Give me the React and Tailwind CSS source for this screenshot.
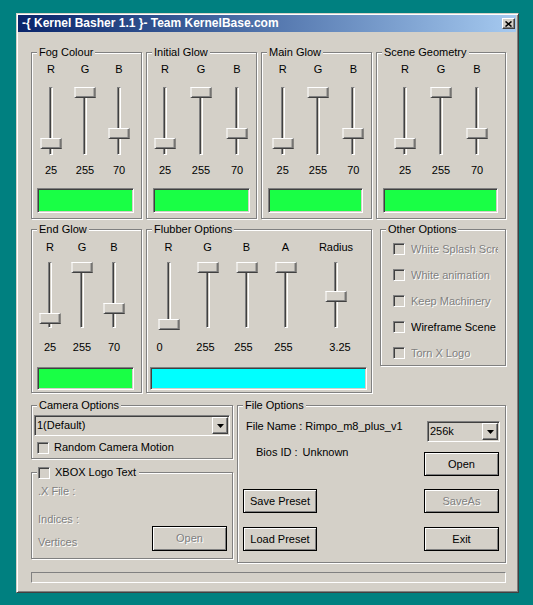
import React from 'react';

const raised = 'bg-[#d4d0c8] border border-white border-r-[#404040] border-b-[#404040] shadow-[inset_-1px_-1px_0_#808080]';
const sunken = 'border border-[#808080] border-r-white border-b-white shadow-[inset_1px_1px_0_#404040,inset_-1px_-1px_0_#d4d0c8]';
const dim = 'text-[#808080] [text-shadow:1px_1px_0_#fff]';

function Group({ label, className = '', children }) {
  return (
    <div className={`relative border border-[#808080] shadow-[1px_1px_0_#fff,inset_1px_1px_0_#fff] ${className}`}>
      <div className="absolute -top-[7px] left-[5px] bg-[#d4d0c8] px-[2px] leading-[13px] whitespace-nowrap">{label}</div>
      {children}
    </div>
  );
}

function Slider({ label, value, frac, w, trackCls, valueCls = '' }) {
  return (
    <div className={`flex flex-col items-center ${w}`}>
      <div className="h-[13px] leading-[13px]">{label}</div>
      <div className={`relative flex justify-center w-full ${trackCls}`}>
        <div className="w-[4px] h-full border border-[#808080] border-r-white border-b-white bg-[#d4d0c8] shadow-[inset_1px_0_0_#404040]" />
        <div
          className={`absolute left-1/2 -translate-x-1/2 w-[21px] h-[11px] ${raised}`}
          style={{ top: Math.round((1 - frac) * 57) }}
        />
      </div>
      <div className={`h-[13px] leading-[13px] ${valueCls}`}>{value}</div>
    </div>
  );
}

function Check({ className = '' }) {
  return <div className={`w-[12px] h-[12px] shrink-0 bg-[#d4d0c8] ${sunken} ${className}`} />;
}

function Arrow() {
  return (
    <svg width="7" height="4" viewBox="0 0 7 4">
      <path d="M0 0H7L3.5 4Z" fill="#000" />
    </svg>
  );
}

function Combo({ text, className = '' }) {
  return (
    <div className={`flex items-center bg-[#d4d0c8] ${sunken} ${className}`}>
      <span className="pl-[2px] leading-[13px]">{text}</span>
      <div className={`ml-auto mr-[1px] w-[16px] h-[17px] flex items-center justify-center ${raised}`}>
        <Arrow />
      </div>
    </div>
  );
}

function Button({ children, disabled, className = '' }) {
  return (
    <div
      className={`flex items-center justify-center bg-[#d4d0c8] border border-black shadow-[inset_1px_1px_0_#fff,inset_-1px_-1px_0_#808080] ${disabled ? dim : ''} ${className}`}
    >
      {children}
    </div>
  );
}

const rgb = [
  { label: 'R', value: 25 },
  { label: 'G', value: 255 },
  { label: 'B', value: 70 },
];

function RgbGroup({ label, w, pad, col, swatch }) {
  return (
    <Group label={label} className={`${w} h-[167px]`}>
      <div className={`flex pt-[10px] ${pad}`}>
        {rgb.map((s) => (
          <Slider key={s.label} label={s.label} value={s.value} frac={s.value / 255} w={col} trackCls="mt-[11px] h-[68px]" valueCls="mt-[9px]" />
        ))}
      </div>
      <div className={`mt-[11px] h-[25px] bg-[#19ff45] ${sunken} ${swatch}`} />
    </Group>
  );
}

const flubber = [
  { label: 'R', value: 0, frac: 0, cls: '-translate-x-[9px]' },
  { label: 'G', value: 255, frac: 1, cls: '-translate-x-[2px]' },
  { label: 'B', value: 255, frac: 1, cls: '-translate-x-[3px]' },
  { label: 'A', value: 255, frac: 1, cls: '-translate-x-[2px]' },
];

const others = [
  { text: 'White Splash Screen', on: false },
  { text: 'White animation', on: false },
  { text: 'Keep Machinery', on: false },
  { text: 'Wireframe Scene', on: true },
  { text: 'Torn X Logo', on: false },
];

export default function App() {
  return (
    <div className="min-h-screen bg-[#008080] pt-[13px] pl-[16px] font-['Liberation_Sans',Arial,sans-serif] text-[11px] text-black">
      <div className="w-[503px] h-[580px] bg-[#d4d0c8] border border-[#d4d0c8] border-r-[#404040] border-b-[#404040] shadow-[inset_1px_1px_0_#fff,inset_-1px_-1px_0_#808080] p-[1px] pr-[2px] flex flex-col">
        <div className="h-[17px] bg-linear-to-r from-[#0a246a] to-[#a6caf0] flex items-center pl-[4px] pr-[1px]">
          <span className="text-white font-bold text-[12px] leading-[17px] whitespace-nowrap">-{'{'} Kernel Basher 1.1 {'}'}- Team KernelBase.com</span>
          <div className={`ml-auto w-[13px] h-[11px] flex items-center justify-center ${raised}`}>
            <svg width="7" height="6" viewBox="0 0 7 6">
              <path d="M0.5 0.5L6.5 5.5M6.5 0.5L0.5 5.5" stroke="#000" strokeWidth="1.6" />
            </svg>
          </div>
        </div>

        <div className="pl-[13px] flex flex-col">
          <div className="mt-[20px] flex gap-[4px]">
            <RgbGroup label="Fog Colour" w="w-[111px]" pad="pl-[2px]" col="w-[34px]" swatch="ml-[5px] w-[97px]" />
            <RgbGroup label="Initial Glow" w="w-[111px]" pad="pl-0" col="w-[36px]" swatch="ml-[6px] w-[97px]" />
            <RgbGroup label="Main Glow" w="w-[111px]" pad="pl-[3px]" col="w-[36px]" swatch="ml-[6px] w-[95px]" />
            <RgbGroup label="Scene Geometry" w="w-[130px]" pad="pl-[10px]" col="w-[36px]" swatch="ml-[6px] w-[115px]" />
          </div>

          <div className="mt-[10px] flex items-start">
            <Group label="End Glow" className="w-[111px] h-[164px]">
              <div className="flex pt-[11px] pl-[2px]">
                {rgb.map((s) => (
                  <Slider key={s.label} label={s.label} value={s.value} frac={s.value / 255} w="w-[32px]" trackCls="mt-[8px] h-[66px]" valueCls="mt-[13px]" />
                ))}
              </div>
              <div className={`mt-[13px] ml-[5px] w-[97px] h-[23px] bg-[#19ff45] ${sunken}`} />
            </Group>

            <Group label="Flubber Options" className="ml-[4px] w-[226px] h-[164px]">
              <div className="flex pt-[11px] pl-[2px]">
                {flubber.map((s) => (
                  <Slider key={s.label} label={s.label} value={s.value} frac={s.frac} w="w-[39px]" trackCls="mt-[8px] h-[66px]" valueCls={`mt-[13px] ${s.cls}`} />
                ))}
                <Slider label="Radius" value="3.25" frac={0.5} w="w-[62px]" trackCls="mt-[8px] h-[66px]" valueCls="mt-[13px] translate-x-[4px]" />
              </div>
              <div className={`mt-[13px] ml-[3px] w-[217px] h-[23px] bg-[#00ffff] ${sunken}`} />
            </Group>

            <Group label="Other Options" className="ml-[8px] w-[126px] h-[137px]">
              <div className="flex flex-col pt-[6px] pl-[12px]">
                {others.map((o) => (
                  <div key={o.text} className="h-[26px] flex items-center gap-[6px]">
                    <Check />
                    <span className={`w-[87px] overflow-hidden whitespace-nowrap leading-[13px] ${o.on ? '' : dim}`}>{o.text}</span>
                  </div>
                ))}
              </div>
            </Group>
          </div>

          <div className="mt-[12px] flex items-start">
            <div className="flex flex-col w-[202px]">
              <Group label="Camera Options" className="h-[54px]">
                <Combo text="1(Default)" className="mt-[9px] ml-[2px] w-[196px] h-[21px]" />
                <div className="mt-[5px] ml-[5px] flex items-center gap-[5px]">
                  <Check />
                  <span className="leading-[13px]">Random Camera Motion</span>
                </div>
              </Group>

              <div className="mt-[13px] relative border border-[#808080] shadow-[1px_1px_0_#fff,inset_1px_1px_0_#fff] h-[87px]">
                <div className="absolute -top-[7px] left-[5px] bg-[#d4d0c8] px-[1px] flex items-center gap-[5px]">
                  <Check />
                  <span className="leading-[13px] pr-[2px]">XBOX Logo Text</span>
                </div>
                <div className="flex flex-col pl-[6px] pt-[12px]">
                  <span className={`leading-[13px] ${dim}`}>.X File :</span>
                  <span className={`mt-[15px] leading-[13px] ${dim}`}>Indices :</span>
                  <div className="flex justify-between items-start pr-[5px]">
                    <span className={`mt-[10px] leading-[13px] ${dim}`}>Vertices</span>
                    <Button disabled className="w-[75px] h-[25px]">Open</Button>
                  </div>
                </div>
              </div>
            </div>

            <Group label="File Options" className="ml-[4px] w-[269px] h-[158px]">
              <div className="flex">
                <div className="flex flex-col pl-[5px]">
                  <span className="mt-[14px] ml-[3px] leading-[13px] whitespace-nowrap">File Name : Rimpo_m8_plus_v1</span>
                  <div className="mt-[13px] ml-[13px] flex gap-[5px] leading-[13px]">
                    <span>Bios ID :</span>
                    <span>Unknown</span>
                  </div>
                  <Button className="mt-[30px] w-[74px] h-[24px]">Save Preset</Button>
                  <Button className="mt-[14px] w-[74px] h-[24px]">Load Preset</Button>
                </div>
                <div className="ml-auto mr-[5px] flex flex-col w-[76px]">
                  <Combo text="256k" className="mt-[15px] ml-[3px] w-[73px] h-[21px]" />
                  <Button className="mt-[10px] w-[75px] h-[24px]">Open</Button>
                  <Button disabled className="mt-[13px] w-[75px] h-[24px]">SaveAs</Button>
                  <Button className="mt-[14px] w-[75px] h-[24px]">Exit</Button>
                </div>
              </div>
            </Group>
          </div>

          <div className={`mt-[9px] w-[475px] h-[11px] border border-[#808080] border-r-white border-b-white`} />
        </div>
      </div>
    </div>
  );
}
